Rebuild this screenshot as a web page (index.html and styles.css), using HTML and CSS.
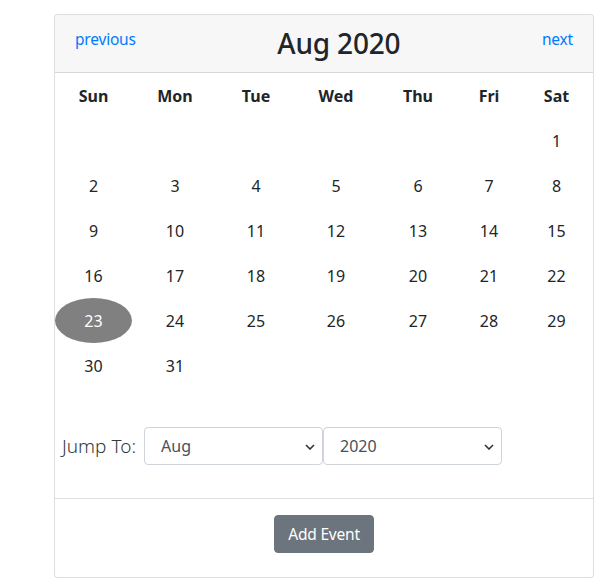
FILE: index.html
```html
<!DOCTYPE html>
<html>
<head>
<meta charset="utf-8">
<link rel="stylesheet" href="styles.css">
</head>
<body>
<div class="card">
  <div class="card-header">
    <a class="nav-link" href="#">previous</a>
    <h3 class="title">Aug 2020</h3>
    <a class="nav-link" href="#">next</a>
  </div>
  <table class="cal">
    <thead>
      <tr><th>Sun</th><th>Mon</th><th>Tue</th><th>Wed</th><th>Thu</th><th>Fri</th><th>Sat</th></tr>
    </thead>
    <tbody>
      <tr><td></td><td></td><td></td><td></td><td></td><td></td><td>1</td></tr>
      <tr><td>2</td><td>3</td><td>4</td><td>5</td><td>6</td><td>7</td><td>8</td></tr>
      <tr><td>9</td><td>10</td><td>11</td><td>12</td><td>13</td><td>14</td><td>15</td></tr>
      <tr><td>16</td><td>17</td><td>18</td><td>19</td><td>20</td><td>21</td><td>22</td></tr>
      <tr><td class="today">23</td><td>24</td><td>25</td><td>26</td><td>27</td><td>28</td><td>29</td></tr>
      <tr><td>30</td><td>31</td><td></td><td></td><td></td><td></td><td></td></tr>
    </tbody>
  </table>
  <div class="jump">
    <label class="jump-label">Jump To:</label>
    <div class="select-wrap">
      <select class="form-select"><option>Jan</option><option>Feb</option><option>Mar</option><option>Apr</option><option>May</option><option>Jun</option><option>Jul</option><option selected>Aug</option><option>Sep</option><option>Oct</option><option>Nov</option><option>Dec</option></select>
      <svg class="chev" width="10" height="6" viewBox="0 0 10 6"><path d="M1 1l4 4 4-4" fill="none" stroke="#333" stroke-width="1.6"/></svg>
    </div>
    <div class="select-wrap">
      <select class="form-select"><option>2019</option><option selected>2020</option><option>2021</option></select>
      <svg class="chev" width="10" height="6" viewBox="0 0 10 6"><path d="M1 1l4 4 4-4" fill="none" stroke="#333" stroke-width="1.6"/></svg>
    </div>
  </div>
  <div class="card-footer">
    <button class="btn">Add Event</button>
  </div>
</div>
</body>
</html>
```
FILE: styles.css
```css
* { box-sizing: border-box; }
body {
  margin: 0;
  padding: 14px 17px 0 54px;
  font-family: "Noto Sans", "Open Sans", sans-serif;
  font-size: 16px;
  line-height: 1.5;
  color: #212529;
  background: #fff;
}
.card {
  width: 540px;
  border: 1px solid rgba(0,0,0,0.125);
  border-radius: 4px;
  background: #fff;
}
.card-header {
  display: flex;
  justify-content: space-between;
  align-items: flex-start;
  padding: 12px 20px;
  background: #f7f7f7;
  border-bottom: 1px solid rgba(0,0,0,0.125);
  border-radius: 3px 3px 0 0;
}
.nav-link {
  color: #007bff;
  text-decoration: none;
  font-size: 15.5px;
  line-height: 24px;
  letter-spacing: -0.2px;
}
.title {
  margin: 0;
  font-size: 28px;
  font-weight: 500;
  line-height: 33px;
  letter-spacing: -0.2px;
}
.cal {
  width: 538px;
  border-collapse: collapse;
  table-layout: fixed;
}
.cal th, .cal td {
  height: 45px;
  padding: 0;
  text-align: center;
  vertical-align: middle;
}
.cal th { font-weight: 700; }
.cal th:nth-child(1) { width: 77px; }
.cal th:nth-child(2) { width: 86px; }
.cal th:nth-child(3) { width: 76px; }
.cal th:nth-child(4) { width: 84px; }
.cal th:nth-child(5) { width: 80px; }
.cal th:nth-child(6) { width: 62px; }
.cal th:nth-child(7) { width: 73px; }
.cal td.today {
  background: #808080;
  color: #fff;
  border-radius: 50%;
}
.jump {
  display: flex;
  align-items: center;
  padding: 39px 0 33px 7px;
  border-bottom: 1px solid rgba(0,0,0,0.125);
}
.jump-label {
  font-size: 19px;
  font-weight: 300;
  color: #343a40;
  margin-right: 8px;
}
.select-wrap {
  position: relative;
  width: 179px;
}
.form-select {
  appearance: none;
  -webkit-appearance: none;
  width: 100%;
  height: 38px;
  padding: 0 12px 0 16px;
  border: 1px solid #ced4da;
  border-radius: 4px;
  background: #fff;
  font-family: inherit;
  font-size: 16px;
  color: #495057;
}
.chev {
  position: absolute;
  right: 8px;
  top: 17px;
  pointer-events: none;
}
.card-footer {
  display: flex;
  justify-content: center;
  padding: 16px 0 24px;
}
.btn {
  height: 38px;
  padding: 0 13px;
  border: 1px solid #6c757d;
  border-radius: 4px;
  background: #6c757d;
  color: #fff;
  font-family: inherit;
  font-size: 15.5px;
  letter-spacing: -0.2px;
}
```
